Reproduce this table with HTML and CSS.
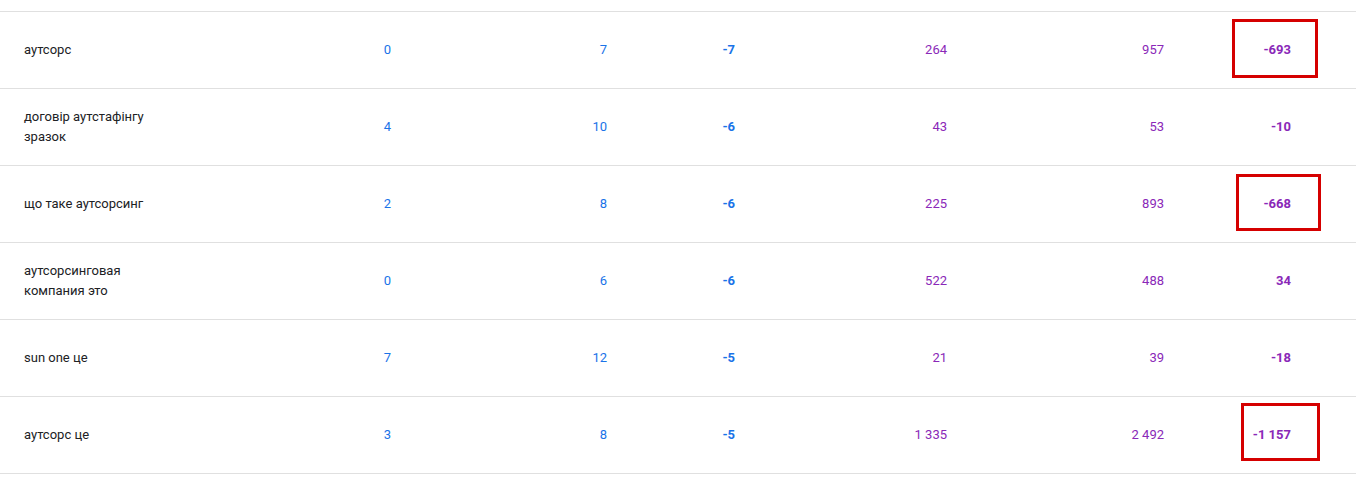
FILE: index.html
```html
<!DOCTYPE html>
<html lang="uk">
<head>
<meta charset="utf-8">
<title>Queries</title>
<link rel="stylesheet" href="styles.css">
</head>
<body>
<div class="table">
  <div class="row">
    <div class="cell name"><span>аутсорс</span></div>
    <div class="cell c2 blue">0</div>
    <div class="cell c3 blue">7</div>
    <div class="cell c4 blue bold">-7</div>
    <div class="cell c5 purple">264</div>
    <div class="cell c6 purple">957</div>
    <div class="cell c7 purple bold">-693</div>
    <div class="mark mark1"></div>
  </div>
  <div class="row">
    <div class="cell name"><span>договір аутстафінгу зразок</span></div>
    <div class="cell c2 blue">4</div>
    <div class="cell c3 blue">10</div>
    <div class="cell c4 blue bold">-6</div>
    <div class="cell c5 purple">43</div>
    <div class="cell c6 purple">53</div>
    <div class="cell c7 purple bold">-10</div>
  </div>
  <div class="row">
    <div class="cell name"><span>що таке аутсорсинг</span></div>
    <div class="cell c2 blue">2</div>
    <div class="cell c3 blue">8</div>
    <div class="cell c4 blue bold">-6</div>
    <div class="cell c5 purple">225</div>
    <div class="cell c6 purple">893</div>
    <div class="cell c7 purple bold">-668</div>
    <div class="mark mark2"></div>
  </div>
  <div class="row">
    <div class="cell name"><span>аутсорсинговая компания это</span></div>
    <div class="cell c2 blue">0</div>
    <div class="cell c3 blue">6</div>
    <div class="cell c4 blue bold">-6</div>
    <div class="cell c5 purple">522</div>
    <div class="cell c6 purple">488</div>
    <div class="cell c7 purple bold">34</div>
  </div>
  <div class="row">
    <div class="cell name"><span>sun one це</span></div>
    <div class="cell c2 blue">7</div>
    <div class="cell c3 blue">12</div>
    <div class="cell c4 blue bold">-5</div>
    <div class="cell c5 purple">21</div>
    <div class="cell c6 purple">39</div>
    <div class="cell c7 purple bold">-18</div>
  </div>
  <div class="row">
    <div class="cell name"><span>аутсорс це</span></div>
    <div class="cell c2 blue">3</div>
    <div class="cell c3 blue">8</div>
    <div class="cell c4 blue bold">-5</div>
    <div class="cell c5 purple">1 335</div>
    <div class="cell c6 purple">2 492</div>
    <div class="cell c7 purple bold">-1 157</div>
    <div class="mark mark3"></div>
  </div>
</div>
</body>
</html>
```

FILE: styles.css
```css
html, body {
  margin: 0;
  padding: 0;
  background: #ffffff;
}
body {
  font-family: Roboto, "Noto Sans", Arial, sans-serif;
  font-size: 13px;
  color: #202124;
}
.table {
  padding-top: 11px;
}
.row {
  position: relative;
  display: grid;
  grid-template-columns: 200px 191px 216px 128px 212px 217px 127px;
  padding-right: 65px;
  height: 76px;
  border-top: 1px solid #e0e0e0;
  align-items: center;
}
.row:last-child {
  border-bottom: 1px solid #e0e0e0;
}
.cell {
  text-align: right;
  line-height: 20px;
}
.cell.name {
  text-align: left;
  padding-left: 24px;
}
.cell.name span {
  display: block;
  max-width: 140px;
}
.blue {
  color: #1a73e8;
}
.purple {
  color: #8a28b8;
}
.bold {
  font-weight: 700;
}
.mark {
  position: absolute;
  border: 3px solid #d50000;
  box-sizing: border-box;
}
.mark1 {
  left: 1232px;
  top: 7px;
  width: 86px;
  height: 59px;
}
.mark2 {
  left: 1236px;
  top: 8px;
  width: 85px;
  height: 57px;
}
.mark3 {
  left: 1241px;
  top: 6px;
  width: 79px;
  height: 58px;
}
```
